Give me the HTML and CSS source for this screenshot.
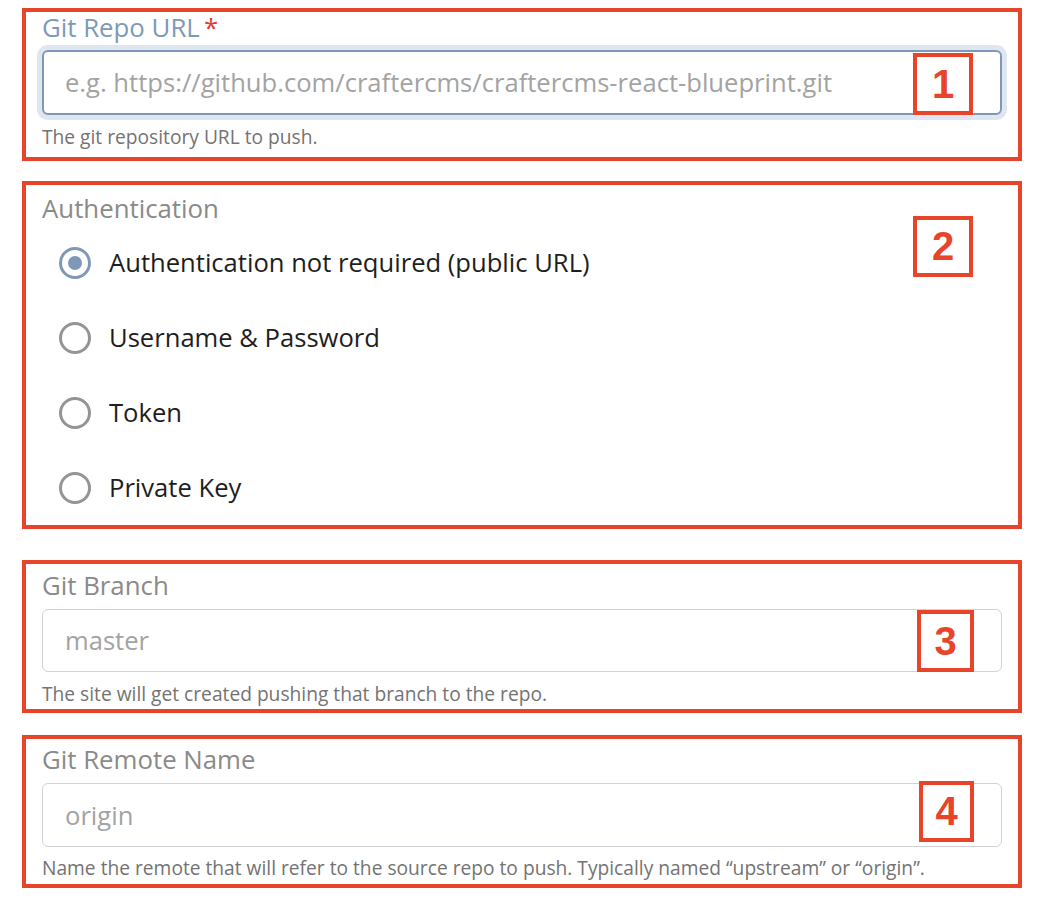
FILE: index.html
```html
<!DOCTYPE html>
<html lang="en">
<head>
<meta charset="utf-8">
<title>Git repository form</title>
<link rel="stylesheet" href="styles.css">
</head>
<body>
<div class="page">
  <section class="box box-url">
    <label class="field-label focused">Git Repo URL<span class="req">&thinsp;*</span></label>
    <div class="input focused"><span class="placeholder">e.g. https://github.com/craftercms/craftercms-react-blueprint.git</span></div>
    <p class="helper">The git repository URL to push.</p>
    <span class="marker marker-1">1</span>
  </section>

  <section class="box box-auth">
    <div class="field-label">Authentication</div>
    <div class="radios">
      <div class="radio-row"><span class="radio checked"></span><span class="radio-text">Authentication not required (public URL)</span></div>
      <div class="radio-row"><span class="radio"></span><span class="radio-text">Username &amp; Password</span></div>
      <div class="radio-row"><span class="radio"></span><span class="radio-text">Token</span></div>
      <div class="radio-row"><span class="radio"></span><span class="radio-text">Private Key</span></div>
    </div>
    <span class="marker marker-2">2</span>
  </section>

  <section class="box box-branch">
    <label class="field-label">Git Branch</label>
    <div class="input"><span class="placeholder">master</span></div>
    <p class="helper">The site will get created pushing that branch to the repo.</p>
    <span class="marker marker-3">3</span>
  </section>

  <section class="box box-remote">
    <label class="field-label">Git Remote Name</label>
    <div class="input"><span class="placeholder">origin</span></div>
    <p class="helper">Name the remote that will refer to the source repo to push. Typically named “upstream” or “origin”.</p>
    <span class="marker marker-4">4</span>
  </section>
</div>
</body>
</html>
```
FILE: styles.css
```css
* { box-sizing: border-box; }
html, body { margin: 0; padding: 0; background: #ffffff; }
body { font-family: "Open Sans", "Noto Sans", sans-serif; }

.page {
  width: 1050px;
  padding: 8px 0 0 22px;
}

.box {
  position: relative;
  width: 1000px;
  border: 4px solid #e84429;
  padding: 0 16px;
}

.box-url { padding-top: 0; padding-bottom: 8px; }
.box-auth { margin-top: 20px; padding-top: 8px; padding-bottom: 0; height: 348px; }
.box-branch { margin-top: 31px; padding-top: 6px; padding-bottom: 3px; }
.box-remote { margin-top: 22px; padding-top: 5px; padding-bottom: 4px; }

.field-label {
  display: block;
  font-size: 25.8px;
  line-height: 30px;
  color: #8a8a8a;
  white-space: nowrap;
}
.field-label.focused { color: #7e99b7; }
.req { color: #e5392f; }

.input {
  display: flex;
  align-items: center;
  height: 63px;
  border: 1px solid #cfd2d6;
  border-radius: 6px;
  padding-left: 22px;
  margin-top: 9px;
  background: #fff;
}
.input.focused {
  height: 65px;
  margin-top: 8px;
  border: 2px solid #7e99b7;
  padding-left: 21px;
  box-shadow: 0 0 0 5px #dfe6ee;
}
.box-remote .input { height: 64px; }

.placeholder {
  font-size: 25.6px;
  color: #a3a3a3;
  white-space: nowrap;
}

.helper {
  margin: 10px 0 0 0;
  font-size: 19.2px;
  line-height: 24px;
  color: #737373;
  white-space: nowrap;
}
.box-remote .helper { margin-top: 9px; }

.radios {
  margin-top: 2px;
  padding-left: 17px;
}
.radio-row {
  display: flex;
  align-items: center;
  height: 75px;
}
.radio {
  width: 32px;
  height: 32px;
  border: 3px solid #949494;
  border-radius: 50%;
  display: flex;
  align-items: center;
  justify-content: center;
  flex: none;
}
.radio.checked { border-color: #7e99b7; }
.radio.checked::after {
  content: "";
  width: 14px;
  height: 14px;
  border-radius: 50%;
  background: #7e99b7;
}
.radio-text {
  margin-left: 18px;
  font-size: 25.6px;
  color: #1e1e1e;
  white-space: nowrap;
}

.marker {
  position: absolute;
  display: flex;
  align-items: center;
  justify-content: center;
  width: 60px;
  height: 62px;
  border: 4px solid #e84429;
  background: transparent;
  color: #e84429;
  font-family: "Liberation Sans", Arial, sans-serif;
  font-weight: bold;
  font-size: 40px;
}
.marker-1 { right: 45px; top: 41px; }
.marker-2 { right: 45px; top: 31px; height: 61px; }
.marker-3 { right: 44px; top: 46px; width: 57px; }
.marker-4 { right: 44px; top: 42px; width: 55px; height: 61px; }
```
